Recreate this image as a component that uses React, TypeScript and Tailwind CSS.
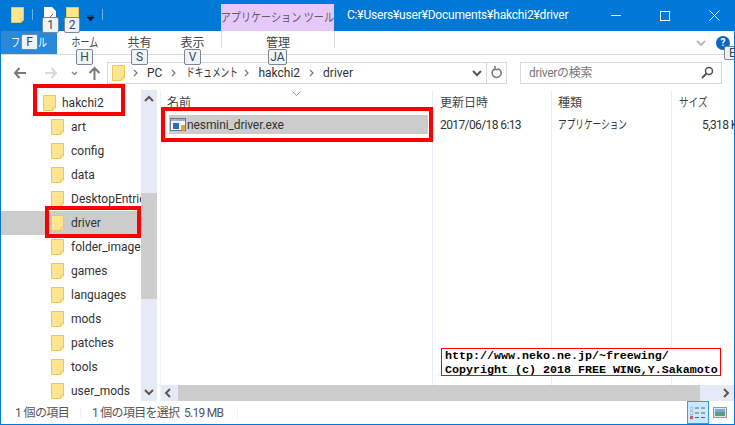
const font = '[font-family:"Roboto","Noto_Sans_CJK_JP",sans-serif]';

const Folder = ({ className = "" }: { className?: string }) => (
  <svg width="13" height="16" viewBox="0 0 13 16" className={"shrink-0 " + className}>
    <path d="M.5.5h12v12.5l-2.500 2.500H.5z" fill="#fde68e" stroke="#eac95b" />
    <path d="M10 15v-3h2.500" fill="#fff3c4" stroke="#eac95b" />
  </svg>
);

const KeyTip = ({ label, className }: { label: string; className: string }) => (
  <div className={"absolute h-[16px] flex items-center justify-center rounded-[2px] border border-[#7b8794] bg-[#eef3f8] text-[12px] leading-none text-[#3c4650] " + className}>
    {label}
  </div>
);

const RedBox = ({ className }: { className: string }) => (
  <div className={"absolute border-[4px] border-[#ff0000] " + className} />
);

const treeItems = ["art", "config", "data", "DesktopEntries", "driver", "folder_images", "games", "languages", "mods", "patches", "tools", "user_mods"];

const Chevron = ({ d, className = "" }: { d: string; className?: string }) => (
  <svg width="10" height="8" viewBox="0 0 10 8" className={className}>
    <path d={d} fill="none" stroke="#5f5552" strokeWidth="2" />
  </svg>
);

const Crumb = ({ className = "" }: { className?: string }) => (
  <svg width="5" height="8" viewBox="0 0 5 8" className={"shrink-0 " + className}>
    <path d="M1 1l3 3-3 3" fill="none" stroke="#777" strokeWidth="1.200" />
  </svg>
);

const columnLine = "border-r border-[#e6eefa]";

export default function App() {
  return (
    <div className={"relative w-[735px] h-[425px] overflow-hidden bg-white flex flex-col border-x border-b border-[#0078d7] text-[12px] text-[#1a1a1a] " + font}>
      {/* title bar */}
      <div className="h-[31px] shrink-0 bg-[#0078d7] flex text-white">
        <div className="flex items-start pt-[7px] w-[220px] pl-[10px]">
          <Folder />
          <div className="ml-[8px] mt-[2px] w-[1px] h-[11px] bg-[#6fb2e8]" />
          <svg width="12" height="14" viewBox="0 0 12 14" className="ml-[11px]">
            <path d="M0 0h8l4 4v10H0z" fill="#fff" />
            <path d="M6 10l3-3" stroke="#d04a2a" />
          </svg>
          <Folder className="ml-[10px]" />
          <svg width="7" height="7" viewBox="0 0 7 7" className="ml-[8px] mt-[8px]">
            <path d="M0 0h7M0 2h7l-3.500 4z" fill="#111" stroke="#111" strokeWidth=".6" />
          </svg>
          <div className="ml-[8px] mt-[2px] w-[1px] h-[11px] bg-[#6fb2e8]" />
        </div>
        <div className="mt-[4px] w-[113px] h-[27px] bg-[#e6c8fb] text-[#5e5a66] flex items-center justify-center whitespace-nowrap">
          <span className="inline-block scale-x-[0.84]">アプリケーション ツール</span>
        </div>
        <div className="ml-[13px] flex-1 flex items-center pb-[1px] whitespace-nowrap tracking-[-0.2px]">
          C:¥Users¥user¥Documents¥hakchi2¥driver
        </div>
        <div className="flex items-center pr-[14px] gap-[35px]">
          <div className="w-[10px] h-[1px] bg-white" />
          <div className="ml-[4px] w-[10px] h-[10px] border border-white" />
          <svg width="11" height="11" viewBox="0 0 11 11" className="ml-[4px]">
            <path d="M.5.5l10 10M10.500.5l-10 10" stroke="#fff" />
          </svg>
        </div>
      </div>

      {/* ribbon tabs */}
      <div className="h-[24px] shrink-0 flex border-b border-[#d9d9d9] text-[#444] whitespace-nowrap">
        <div className="w-[56px] bg-[#2b87d8] text-white flex items-center justify-center">
          <span className="inline-block scale-x-[0.75]">ファイル</span>
        </div>
        <div className="w-[56px] flex items-center justify-center">
          <span className="inline-block scale-x-[0.75]">ホーム</span>
        </div>
        <div className="w-[53px] flex items-center justify-center">共有</div>
        <div className="w-[53px] flex items-center justify-center">表示</div>
        <div className="ml-[2px] w-[114px] h-[17px] border-x border-[#d9d9d9] flex items-start justify-center pt-[3px]">管理</div>
        <div className="flex-1 flex justify-end items-center pr-[4px] gap-[10px]">
          <Chevron d="M1 2l4 4 4-4" className="opacity-40" />
          <div className="w-[14px] h-[14px] rounded-full bg-[#0a66c2] text-white text-[10px] font-bold flex items-center justify-center">?</div>
        </div>
      </div>

      {/* address row */}
      <div className="h-[35px] shrink-0 flex items-center">
        <svg width="100" height="16" viewBox="0 0 100 16" className="ml-[12px] mr-[-6px] shrink-0">
          <path d="M2 8h11M6.500 3L2 8l4.500 5" fill="none" stroke="#7a7a7a" strokeWidth="2" />
          <path d="M32 8h11M38.500 3L43 8l-4.500 5" fill="none" stroke="#d4d9df" strokeWidth="2" />
          <path d="M59 7l2.500 2.500L64 7" fill="none" stroke="#8a8a8a" strokeWidth="1.500" />
          <path d="M81.500 15V3M76.500 8l5-5 5 5" fill="none" stroke="#7a7a7a" strokeWidth="2" />
        </svg>
        <div className="w-[400px] h-[22px] border border-[#d9d9d9] flex items-center text-[#333] whitespace-nowrap">
          <Folder className="ml-[4px]" />
          <Crumb className="ml-[8px]" />
          <span className="ml-[9px]">PC</span>
          <Crumb className="ml-[9px]" />
          <span className="ml-[10px] w-[50px] inline-block origin-left scale-x-[0.72]">ドキュメント</span>
          <Crumb className="ml-[8px]" />
          <span className="ml-[9px]">hakchi2</span>
          <Crumb className="ml-[9px]" />
          <span className="ml-[9px]">driver</span>
          <div className="ml-auto flex items-center h-full">
            <Chevron d="M1 2l4 4 4-4" className="mr-[4px]" />
            <div className="w-[20px] h-full border-l border-[#d9d9d9] flex items-center justify-center">
              <svg width="12" height="13" viewBox="0 0 12 13">
                <path d="M7 2.600a4.500 4.500 0 1 1-3 .1M4 0v3.500h3.500" fill="none" stroke="#7a7a7a" strokeWidth="1.500" />
              </svg>
            </div>
          </div>
        </div>
        <div className="ml-[13px] w-[202px] h-[22px] border border-[#d9d9d9] flex items-center px-[8px] text-[#777] tracking-[-0.3px]">
          driverの検索
          <svg width="13" height="13" viewBox="0 0 13 13" className="ml-auto mr-[-1px]">
            <circle cx="8" cy="5" r="3.500" fill="none" stroke="#555" strokeWidth="1.500" />
            <path d="M5.500 7.500L1 12" stroke="#555" strokeWidth="2" />
          </svg>
        </div>
      </div>

      {/* body */}
      <div className="flex-1 min-h-0 flex">
        {/* tree */}
        <div className="w-[140px] shrink-0 overflow-hidden whitespace-nowrap">
          <div className="h-[25px] flex items-center pl-[42px] gap-[6px]">
            <Folder />
            <span className="text-[#333]">hakchi2</span>
          </div>
          {treeItems.map((name) => (
            <div key={name} className={"h-[24px] flex items-center pl-[50px] gap-[7px] " + (name === "driver" ? "bg-[#cccccc]" : "")}>
              <Folder />
              <span className="text-[#333]">{name}</span>
            </div>
          ))}
        </div>
        {/* tree scrollbar */}
        <div className="w-[16px] shrink-0 bg-[#e4ebf6] flex flex-col items-center">
          <Chevron d="M1 6l4-4 4 4" className="mt-[5px]" />
          <div className="mt-[90px] w-full h-[106px] bg-[#cdcdcd]" />
          <Chevron d="M1 2l4 4 4-4" className="mt-auto mb-[5px]" />
        </div>
        {/* file pane */}
        <div className="flex-1 min-w-0 ml-[3px] flex flex-col border-l border-[#f2f2f2]">
          <div className="flex-1 min-h-0 flex text-[#333] whitespace-nowrap">
            <div className={"w-[272px] shrink-0 relative pl-[6px] " + columnLine}>
              <div className="h-[25px] flex items-center pt-[1px] text-[#444]">名前</div>
              <svg width="9" height="5" viewBox="0 0 9 5" className="absolute left-[131px] top-[1px]">
                <path d="M.5.500l4 4 4-4" fill="none" stroke="#9a9a9a" />
              </svg>
              <div className="ml-[2px] w-[259px] h-[19px] bg-[#cccccc] flex items-center">
                <svg width="16" height="16" viewBox="0 0 16 16" className="ml-[1px] shrink-0">
                  <rect x=".5" y="1.500" width="15" height="12" fill="#f4f6f8" stroke="#6d7b88" />
                  <rect x="1" y="2" width="14" height="2" fill="#9fb3c6" />
                  <rect x="3" y="6" width="6" height="6" fill="#1f6fc4" />
                  <path d="M11 8h4v4l-2 3-2-3z" fill="#e0a526" />
                </svg>
                <span className="ml-[1px] tracking-[-0.1px]">nesmini_driver.exe</span>
              </div>
            </div>
            <div className={"w-[119px] shrink-0 pl-[7px] " + columnLine}>
              <div className="h-[25px] flex items-center pt-[1px] text-[#444]">更新日時</div>
              <div className="h-[19px] flex items-center tracking-[-0.6px]">2017/06/18 6:13</div>
            </div>
            <div className={"w-[120px] shrink-0 pl-[6px] " + columnLine}>
              <div className="h-[25px] flex items-center pt-[1px] text-[#444]">種類</div>
              <div className="h-[19px] flex items-center">
                <span className="inline-block origin-left scale-x-[0.72]">アプリケーション</span>
              </div>
            </div>
            <div className="flex-1 min-w-0 overflow-hidden pl-[7px]">
              <div className="h-[25px] flex items-center pt-[1px] text-[#444]">
                <span className="inline-block origin-left scale-x-[0.8]">サイズ</span>
              </div>
              <div className="h-[19px] flex items-center pl-[23px] tracking-[-0.6px]">5,318 KB</div>
            </div>
          </div>
          {/* horizontal scrollbar */}
          <div className="h-[16px] shrink-0 bg-[#e4ebf6] flex items-center">
            <svg width="8" height="10" viewBox="0 0 8 10" className="ml-[3px]">
              <path d="M6 1L2 5l4 4" fill="none" stroke="#5f5552" strokeWidth="2" />
            </svg>
            <div className="ml-[6px] w-[522px] h-full bg-[#cdcdcd]" />
            <svg width="8" height="10" viewBox="0 0 8 10" className="ml-auto mr-[4px]">
              <path d="M2 1l4 4-4 4" fill="none" stroke="#5f5552" strokeWidth="2" />
            </svg>
          </div>
        </div>
      </div>

      {/* status bar */}
      <div className="h-[23px] shrink-0 flex items-center text-[#555] whitespace-nowrap">
        <span className="ml-[14px] w-[65px] tracking-[-0.6px]">1 個の項目</span>
        <div className="w-[1px] h-[10px] bg-[#eeeeee]" />
        <span className="ml-[11px] w-[145px] tracking-[-0.7px]">1 個の項目を選択&nbsp;&nbsp;5.19 MB</span>
        <div className="w-[1px] h-[10px] bg-[#eeeeee]" />
        <div className="ml-auto h-full w-[22px] border border-[#3c9bd6] bg-[#cce8ff] flex items-center justify-center">
          <svg width="16" height="14" viewBox="0 0 16 14">
            <path d="M0 1h3v3H0z" fill="#d8e4f0" stroke="#7ba0c8" strokeWidth=".5" />
            <path d="M0 5.500h3v3H0z" fill="#d8e4f0" stroke="#7ba0c8" strokeWidth=".5" />
            <path d="M0 10h3v3H0z" fill="#e05050" stroke="#7ba0c8" strokeWidth=".5" />
            <path d="M5 2h4m2 0h4M5 7h4m2 0h4M5 11.500h4m2 0h4" stroke="#666" />
          </svg>
        </div>
        <svg width="14" height="12" viewBox="0 0 14 12" className="ml-[4px] mr-[7px]">
          <rect x=".5" y=".5" width="13" height="10" fill="#dbe9f2" stroke="#999" />
          <rect x="2" y="5" width="10" height="4" fill="#5d9a86" />
          <rect x="2" y="2" width="10" height="3" fill="#7fa9d6" />
        </svg>
      </div>

      {/* annotation boxes and key tips over the window */}
      <RedBox className="left-[32px] top-[84px] w-[92px] h-[32px]" />
      <RedBox className="left-[44px] top-[206px] w-[96px] h-[32px]" />
      <RedBox className="left-[160px] top-[107px] w-[272px] h-[35px]" />
      <div className="absolute left-[440px] top-[348px] w-[280px] h-[28px] border border-[#ff0000] bg-white text-black font-bold text-[11.67px] leading-[14px] pl-[3px] whitespace-pre [font-family:'Liberation_Mono',monospace]">
        {"http://www.neko.ne.jp/~freewing/\nCopyright (c) 2018 FREE WING,Y.Sakamoto"}
      </div>
      <KeyTip label="1" className="left-[41px] top-[17px] w-[17px]" />
      <KeyTip label="2" className="left-[63px] top-[17px] w-[16px]" />
      <KeyTip label="F" className="left-[20px] top-[34px] w-[17px]" />
      <KeyTip label="H" className="left-[75px] top-[49px] w-[17px]" />
      <KeyTip label="S" className="left-[130px] top-[49px] w-[17px]" />
      <KeyTip label="V" className="left-[183px] top-[49px] w-[17px]" />
      <KeyTip label="JA" className="left-[267px] top-[49px] w-[19px]" />
      <KeyTip label="E" className="left-[723px] top-[46px] w-[17px] !h-[14px]" />
    </div>
  );
}
